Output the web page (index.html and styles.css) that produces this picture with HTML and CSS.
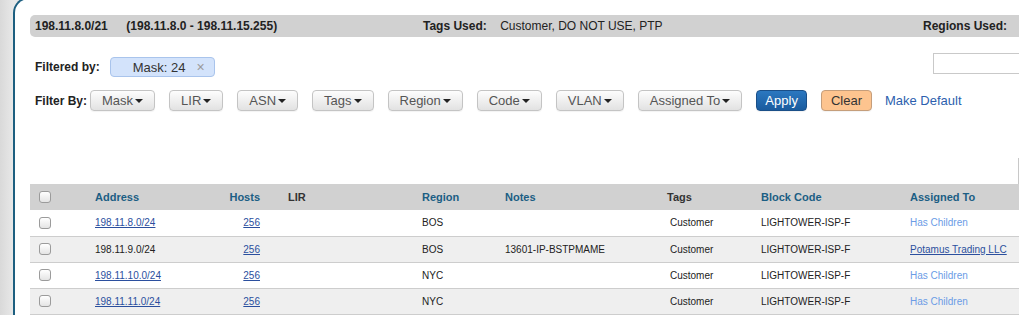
FILE: index.html
```html
<!DOCTYPE html>
<html lang="en">
<head>
    <meta charset="UTF-8">
    <title>Block 198.11.8.0/21</title>
    <link rel="stylesheet" href="styles.css">
</head>
<body>
    <div class="panel">
        <div class="summary">
            <div class="summary-cell">
                <span class="block-cidr">198.11.8.0/21</span>
                <span>(198.11.8.0 - 198.11.15.255)</span>
            </div>
            <div class="summary-cell">
                <span class="summary-label">Tags Used:</span>
                <span class="summary-value">Customer, DO NOT USE, PTP</span>
            </div>
            <div class="summary-cell">
                <span class="summary-label">Regions Used:</span>
                <span class="summary-value">BOS, NYC</span>
            </div>
        </div>

        <div class="filtered-row">
            <span class="row-label">Filtered by:</span>
            <span class="chip">Mask: 24<span class="chip-x">&times;</span></span>
            <input class="search" type="text">
        </div>

        <div class="filter-row">
            <span class="row-label filter-label">Filter By:</span>
            <button class="btn">Mask<span class="caret"></span></button>
            <button class="btn">LIR<span class="caret"></span></button>
            <button class="btn">ASN<span class="caret"></span></button>
            <button class="btn">Tags<span class="caret"></span></button>
            <button class="btn">Region<span class="caret"></span></button>
            <button class="btn">Code<span class="caret"></span></button>
            <button class="btn">VLAN<span class="caret"></span></button>
            <button class="btn">Assigned To<span class="caret"></span></button>
            <button class="btn btn-apply">Apply</button>
            <button class="btn btn-clear">Clear</button>
            <a class="make-default" href="#">Make Default</a>
        </div>

        <div class="table-top"></div>

        <table class="blocks">
            <colgroup>
                <col style="width: 57px">
                <col style="width: 113px">
                <col style="width: 80px">
                <col style="width: 134px">
                <col style="width: 83px">
                <col style="width: 162px">
                <col style="width: 94px">
                <col style="width: 149px">
                <col>
            </colgroup>
            <thead>
                <tr>
                    <th class="cb"><span class="checkbox"></span></th>
                    <th>Address</th>
                    <th class="num">Hosts</th>
                    <th class="plain">LIR</th>
                    <th>Region</th>
                    <th>Notes</th>
                    <th class="plain">Tags</th>
                    <th>Block Code</th>
                    <th>Assigned To</th>
                </tr>
            </thead>
            <tbody>
                <tr>
                    <td class="cb"><span class="checkbox"></span></td>
                    <td><a href="#">198.11.8.0/24</a></td>
                    <td class="num"><a href="#">256</a></td>
                    <td></td>
                    <td>BOS</td>
                    <td></td>
                    <td><span class="tag">Customer</span></td>
                    <td>LIGHTOWER-ISP-F</td>
                    <td><span class="children">Has Children</span></td>
                </tr>
                <tr>
                    <td class="cb"><span class="checkbox"></span></td>
                    <td>198.11.9.0/24</td>
                    <td class="num"><a href="#">256</a></td>
                    <td></td>
                    <td>BOS</td>
                    <td>13601-IP-BSTPMAME</td>
                    <td><span class="tag">Customer</span></td>
                    <td>LIGHTOWER-ISP-F</td>
                    <td><a href="#">Potamus Trading LLC</a></td>
                </tr>
                <tr>
                    <td class="cb"><span class="checkbox"></span></td>
                    <td><a href="#">198.11.10.0/24</a></td>
                    <td class="num"><a href="#">256</a></td>
                    <td></td>
                    <td>NYC</td>
                    <td></td>
                    <td><span class="tag">Customer</span></td>
                    <td>LIGHTOWER-ISP-F</td>
                    <td><span class="children">Has Children</span></td>
                </tr>
                <tr>
                    <td class="cb"><span class="checkbox"></span></td>
                    <td><a href="#">198.11.11.0/24</a></td>
                    <td class="num"><a href="#">256</a></td>
                    <td></td>
                    <td>NYC</td>
                    <td></td>
                    <td><span class="tag">Customer</span></td>
                    <td>LIGHTOWER-ISP-F</td>
                    <td><span class="children">Has Children</span></td>
                </tr>
            </tbody>
        </table>
    </div>
</body>
</html>
```

FILE: styles.css
```css
* {
    margin: 0;
    padding: 0;
    box-sizing: border-box;
}

body {
    height: 315px;
    overflow: hidden;
    padding-left: 13px;
    background: linear-gradient(to right, #d9d9d9, #e8e8e8 13px);
    font-family: 'Liberation Sans', Arial, sans-serif;
    color: #222;
}

.panel {
    width: 1080px;
    height: 330px;
    margin-top: -3px;
    padding: 16px 0 0 15px;
    background: #fff;
    border-top: 2px solid #1d5f80;
    border-left: 2px solid #1d5f80;
    border-top-left-radius: 16px;
}

/* summary bar */
.summary {
    display: grid;
    grid-template-columns: 388px 500px auto;
    height: 22px;
    line-height: 22px;
    padding-left: 5px;
    background: #d1d1d1;
    border-radius: 5px 0 0 5px;
    font-size: 12px;
    font-weight: bold;
    white-space: nowrap;
}

.block-cidr {
    display: inline-block;
    width: 88px;
}

.summary-label {
    margin-right: 10px;
}

.summary-value {
    font-weight: normal;
}

/* filters */
.filtered-row {
    display: flex;
    align-items: flex-start;
    width: 1063px;
    margin-top: 16px;
}

.row-label {
    padding-left: 5px;
    font-size: 12px;
    font-weight: bold;
    line-height: 20px;
}

.filtered-row .row-label {
    margin-top: 4px;
    margin-right: 10px;
}

.chip {
    display: flex;
    align-items: center;
    height: 20px;
    margin-top: 4px;
    padding: 0 9px 0 22px;
    background: #d3e3fb;
    border: 1px solid #a9c4ec;
    border-radius: 4px;
    font-size: 13px;
    color: #333;
}

.chip-x {
    margin-left: 11px;
    color: #9a9a9a;
    font-size: 14px;
}

.search {
    width: 160px;
    height: 21px;
    margin-left: auto;
    border: 1px solid #c9c9c9;
    outline: none;
}

.filter-row {
    display: flex;
    align-items: center;
    gap: 14px;
    margin-top: 13px;
}

.filter-label {
    margin-right: -11px;
}

.btn {
    display: inline-flex;
    align-items: center;
    height: 21px;
    padding: 0 11px;
    font-family: 'Liberation Sans', Arial, sans-serif;
    font-size: 13px;
    color: #555;
    background: linear-gradient(#fdfdfd, #e2e2e2);
    border: 1px solid #c4c4c4;
    border-radius: 4px;
    box-shadow: 0 1px 1px rgba(0, 0, 0, 0.05);
}

.caret {
    width: 0;
    height: 0;
    margin-left: 2px;
    margin-top: 1px;
    border-top: 4px solid #222;
    border-left: 4px solid transparent;
    border-right: 4px solid transparent;
}

.btn-apply {
    padding: 0 8px;
    color: #fff;
    background: linear-gradient(#2b78c0, #1a5b9e);
    border-color: #1a4f88;
}

.btn-clear {
    padding: 0 9px;
    color: #333;
    background: #fdc48f;
    border-color: #c59e7b;
}

.make-default {
    margin-left: -1px;
    font-size: 13px;
    color: #2d5fae;
    text-decoration: none;
}

.table-top {
    width: 989px;
    height: 26px;
    margin-top: 47px;
    border-right: 1px solid #c8c8c8;
}

/* table */
.blocks {
    width: 1063px;
    table-layout: fixed;
    border-collapse: collapse;
    font-size: 10px;
}

.blocks th {
    height: 26px;
    padding: 0 8px;
    background: #d1d1d1;
    text-align: left;
    font-size: 11px;
    color: #1b5e84;
}

.blocks th.plain {
    color: #333;
}

.blocks td {
    height: 26px;
    padding: 0 8px;
    border-bottom: 1px solid #cdcdcd;
    white-space: nowrap;
}

.blocks tbody tr:nth-child(even) td {
    background: #efefef;
}

.blocks .num {
    text-align: right;
    padding-right: 20px;
}

.blocks .cb {
    padding-left: 9px;
}

.blocks a {
    color: #2b4f9e;
}

.checkbox {
    display: block;
    width: 12px;
    height: 12px;
    border: 1px solid #9b9b9b;
    border-radius: 3px;
    background: linear-gradient(#fff, #e4e4e4);
}

.tag {
    padding-left: 3px;
}

.children {
    color: #6b9ce6;
}
```
